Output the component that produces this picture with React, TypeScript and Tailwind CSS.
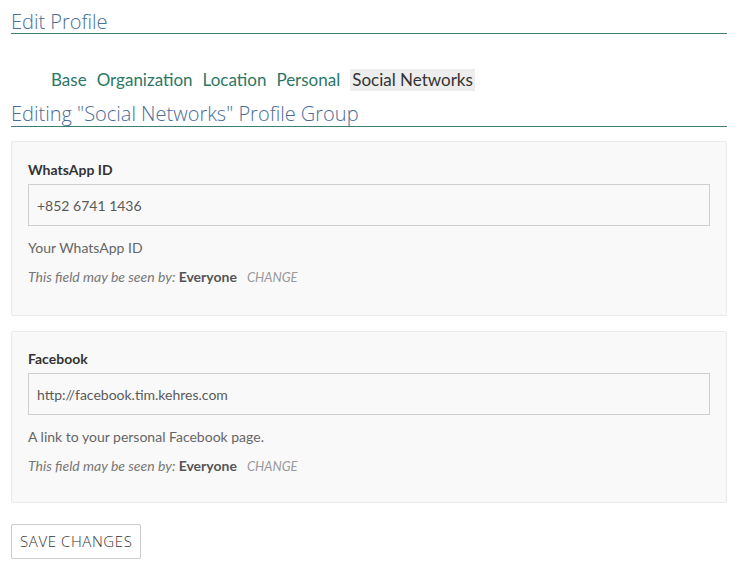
import React from "react";

const body = "font-['Lato','Liberation_Sans',sans-serif]";
const heading = "font-['Open_Sans','Liberation_Sans',sans-serif] font-light";

const tabs = ["Base", "Organization", "Location", "Personal", "Social Networks"];

interface FieldProps {
  label: string;
  value: string;
  description: string;
  className?: string;
}

function Field({ label, value, description, className = "pb-[29px] pt-[19px]" }: FieldProps) {
  return (
    <div className={`rounded-[2px] border border-[#ebebeb] bg-[#f9f9f9] px-4 ${className}`}>
      <div className="text-[14px] font-bold leading-[18px] text-[#333]">{label}</div>
      <div className="mt-[5px] flex h-[42px] items-center border border-[#cfcfcf] bg-[#f9f9f9] px-2 text-[14px] text-[#5a5a5a]">
        {value}
      </div>
      <div className="mt-[13px] text-[14px] leading-[18px] text-[#666]">{description}</div>
      <div className="mt-[11px] text-[14px] leading-[18px] text-[#777]">
        <span className="italic">This field may be seen by: </span>
        <span className="font-bold text-[#555]">Everyone</span>
        <span className="ml-[10px] text-[13px] italic text-[#999]">CHANGE</span>
      </div>
    </div>
  );
}

export default function App() {
  return (
    <div className={`min-h-[576px] bg-white px-[11px] pr-[13px] ${body}`}>
      <h1 className={`border-b border-[#3b7f74] pt-[10px] text-[20px] leading-[23px] text-[#4a6d98] ${heading}`}>
        Edit Profile
      </h1>

      <nav className="mt-[35px] flex gap-[10px] pl-[40px] text-[17px] leading-[22px]">
        {tabs.map((t) =>
          t === "Social Networks" ? (
            <span key={t} className="bg-[#ededed] px-[2px] text-[#333]">
              {t}
            </span>
          ) : (
            <span key={t} className="text-[#2b7766]">
              {t}
            </span>
          )
        )}
      </nav>

      <h2 className={`mt-[11px] border-b border-[#3b7f74] text-[20px] leading-[24px] text-[#4a6d98] ${heading}`}>
        Editing "Social Networks" Profile Group
      </h2>

      <div className="mt-[14px] flex flex-col gap-[15px]">
        <Field label="WhatsApp ID" value="+852 6741 1436" description="Your WhatsApp ID" />
        <Field
          label="Facebook"
          value="http://facebook.tim.kehres.com"
          description="A link to your personal Facebook page."
          className="pb-[27px] pt-[18px]"
        />
      </div>

      <button
        type="button"
        className={`mt-[21px] h-[35px] rounded-[2px] border border-[#ccc] bg-white px-[8px] text-[15px] tracking-[0.6px] text-[#333] ${heading}`}
      >
        SAVE CHANGES
      </button>
    </div>
  );
}
